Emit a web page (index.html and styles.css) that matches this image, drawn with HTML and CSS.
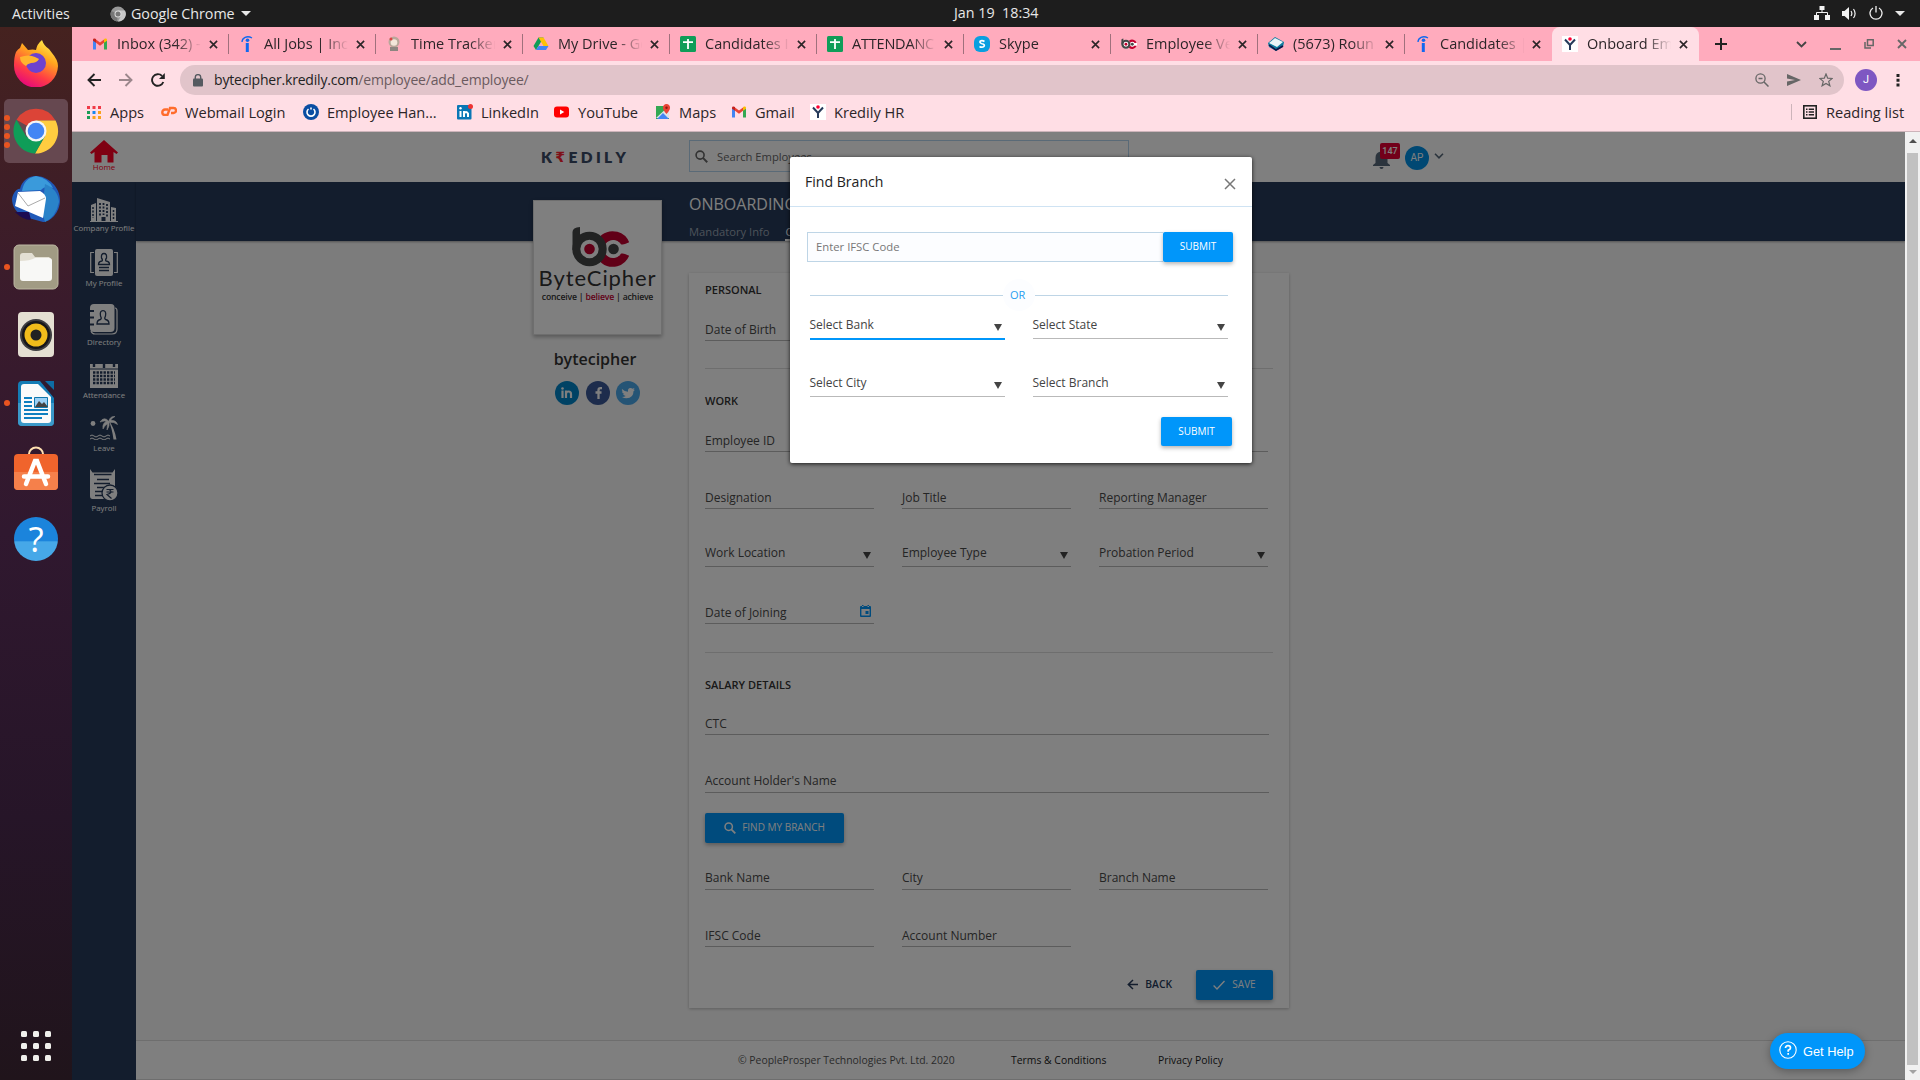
FILE: index.html
```html
<!DOCTYPE html>
<html lang="en">
<head>
<meta charset="utf-8">
<title>Onboard Employee</title>
<link rel="stylesheet" href="styles.css">
</head>
<body>
<svg class="defs" width="0" height="0">
  <defs>
    <symbol id="x" viewBox="0 0 10 10"><path d="M1 1l8 8M9 1l-8 8" stroke="currentColor" stroke-width="1.8" fill="none"/></symbol>
    <symbol id="gmail" viewBox="0 0 16 16"><path d="M1 13.500V4l3 2v7.500z" fill="#4285f4"/><path d="M12 13.500V6l3-2v9.500z" fill="#34a853"/><path d="M4 6.800V3.500l4 3 4-3v3.300l-4 3z" fill="#ea4335"/><path d="M1 4.700V4c0-1.600 1.800-1.900 3-1v3.800z" fill="#c5221f"/><path d="M15 4.700V4c0-1.600-1.800-1.900-3-1v3.800z" fill="#fbbc04"/></symbol>
    <symbol id="indeed" viewBox="0 0 16 16"><path d="M6.800 7h3v9h-3z" fill="#1168ef"/><circle cx="8.500" cy="4.300" r="1.800" fill="#1168ef"/><path d="M3 6C3 2 8 -1 13 2" stroke="#1168ef" stroke-width="1.300" fill="none"/></symbol>
    <symbol id="sheets" viewBox="0 0 16 16"><rect width="16" height="16" rx="1.500" fill="#0f9d58"/><path d="M3 6.200h10M8 3v10" stroke="#fff" stroke-width="1.800"/></symbol>
    <symbol id="kred" viewBox="0 0 16 16"><rect width="16" height="16" fill="#fff"/><path d="M3 3.500l5 5.500 5-5.500M8 8v6" stroke="#263a5a" stroke-width="2" fill="none"/><circle cx="8" cy="3" r="1.800" fill="#f03"/></symbol>
    <symbol id="bc" viewBox="0 0 60 44"><path d="M54 18A13.300 13.300 0 1 0 54 28" fill="none" stroke="#c3002f" stroke-width="9"/><path d="M42 18.500h18v9H42z" fill="#fff"/><circle cx="42.500" cy="23" r="9" fill="#fff"/><circle cx="42.500" cy="23" r="5.300" fill="#454747"/><circle cx="18.500" cy="23" r="16" fill="#fff"/><path d="M1.500 24V6q0-4.500 7.500-5v23z" fill="#454747"/><circle cx="18.500" cy="23" r="13.200" fill="#fff" stroke="#454747" stroke-width="8"/><circle cx="18.500" cy="23" r="5.300" fill="#c3002f"/></symbol>
    <symbol id="mag" viewBox="0 0 12 12"><circle cx="4.700" cy="4.700" r="3.700" fill="none" stroke="currentColor" stroke-width="1.500"/><path d="M7.300 7.300l4 4" stroke="currentColor" stroke-width="1.800"/></symbol>
  </defs>
</svg>

<header class="topbar">
  <span class="act">Activities</span>
  <svg class="tb-ic" width="16" height="16" viewBox="0 0 16 16"><circle cx="8" cy="8" r="7.500" fill="#999"/><path d="M8 8L1.300 5A7.500 7.500 0 0 0 7 15.500z" fill="#777"/><path d="M8 4.500h7A7.500 7.500 0 0 1 8 15.500l3-5.500z" fill="#c8c8c8"/><circle cx="8" cy="8" r="3.500" fill="#ddd"/><circle cx="8" cy="8" r="2.500" fill="#777"/></svg>
  <span class="appname">Google Chrome</span>
  <i class="tri"></i>
  <span class="clock">Jan 19&nbsp; 18:34</span>
  <span class="tray">
    <svg width="16" height="14" viewBox="0 0 16 14"><path d="M5.500 0h5v4h-5zM0 9h5v5H0zM11 9h5v5h-5z" fill="#f2f2f2"/><path d="M8 4v2.500M2.500 9V6.500h11V9" stroke="#f2f2f2" fill="none"/></svg>
    <svg width="15" height="13" viewBox="0 0 15 13"><path d="M0 4h2.500L7 0v13L2.500 9H0z" fill="#f2f2f2"/><path d="M9 4q1.700 2.500 0 5M11.500 2q3.200 4.500 0 9" stroke="#f2f2f2" stroke-width="1.200" fill="none"/></svg>
    <svg width="14" height="14" viewBox="0 0 14 14"><path d="M4 2A6 6 0 1 0 10 2M7 0v6.500" stroke="#f2f2f2" stroke-width="1.300" fill="none"/></svg>
    <i class="tri"></i>
  </span>
</header>

<div class="desk">
  <nav class="dock">
    <div class="app"><svg width="46" height="48" viewBox="0 0 46 48"><defs><linearGradient id="ff" x1=".8" y1="0" x2=".3" y2="1"><stop offset="0" stop-color="#fff44f"/><stop offset=".35" stop-color="#ffa51f"/><stop offset=".7" stop-color="#ff3c45"/><stop offset="1" stop-color="#e4067e"/></linearGradient></defs><path d="M3 13q2-3 4-4l2-5 6 7q5-1 8 0 1-6 6-10 2 6 7 9l3 4q6 7 6 13A22 22 0 0 1 1 26Q1 18 3 13z" fill="url(#ff)"/><circle cx="23" cy="24" r="10" fill="#6d42cf"/><path d="M7 18q9-3 15 0l4 2q-2 4-8 4-4 1-5 3-6-3-6-9z" fill="#ffb52e"/></svg></div>
    <div class="app on"><span class="dots"><i></i><i></i><i></i><i></i></span><svg width="46" height="46" viewBox="0 0 46 46"><path d="M23 23L3.500 11.700A22.500 22.500 0 0 1 42.500 12.500H23z" fill="#dc4437"/><path d="M23 12.500h19.500A22.500 22.500 0 0 1 22 45.500L32 28z" fill="#ffcd40"/><path d="M3.500 11.700L13.500 29l9.500 4-1 12.500A22.500 22.500 0 0 1 3.500 11.700z" fill="#0f9d58"/><path d="M13.500 28.500L22 45.500 32 28z" fill="#0f9d58"/><circle cx="23" cy="23" r="10.500" fill="#f5f5f5"/><circle cx="23" cy="23" r="8.300" fill="#4285f4"/></svg></div>
    <div class="app"><svg width="48" height="48" viewBox="0 0 48 48"><path d="M24 1C36 1 48 12 48 25S38 47 31 47L13 42C4 38 0 31 0 24 1 17 6 13 8 14 10 5 17 1 24 1z" fill="#2059b8"/><path d="M10 16Q12 3 24 1q12 2 17 12-8-3-12 2z" fill="#3a9adb"/><path d="M33 9q13 5 14 18-3 15-14 20l-3-10z" fill="#2a83c9"/><path d="M3 37q8 8 16 8l-2-8z" fill="#1c0b52"/><path d="M6 17l22-1q6 3 6 8l-3 19L3 31z" fill="#fff"/><path d="M6 18l10 13 17-8" fill="none" stroke="#aaa"/></svg></div>
    <div class="app"><span class="dots"><i></i></span><svg width="46" height="46" viewBox="0 0 46 46"><rect x="1" y="1" width="44" height="44" rx="5" fill="#a19b84" stroke="#bdb8a3"/><path d="M7 12q0-3 3-3h9l3 4h14l3 3v4H7z" fill="#e3dfd3"/><path d="M7 17q10 0 15-3h14q3 0 3 3v17q0 3-3 3H10q-3 0-3-3z" fill="#f8f8f6"/></svg></div>
    <div class="app"><svg width="36" height="46" viewBox="0 0 36 46"><rect width="36" height="45" rx="4" fill="#e4dfd2"/><circle cx="18" cy="23" r="16" fill="#3d3d40"/><circle cx="18" cy="23" r="14" fill="#17171a"/><circle cx="18" cy="23" r="11.500" fill="#f0bc1b"/><circle cx="18" cy="23" r="5.500" fill="#222"/></svg></div>
    <div class="app"><span class="dots"><i></i></span><svg width="36" height="45" viewBox="0 0 36 45"><rect width="36" height="45" rx="4" fill="#147cb5"/><path d="M0 22h36v19q0 4-4 4H4q-4 0-4-4z" fill="#3b99c9"/><path d="M3 6q0-3 3-3h14l13 13v23q0 3-3 3H6q-3 0-3-3z" fill="#fafafa"/><path d="M22 0h14v17z" fill="#301a2e"/><path d="M27 0h9v9z" fill="#0e6da5"/><path d="M6 17h8M6 21h8M6 25h8M6 29h24M6 33h24M6 37h18" stroke="#0e7fc0" stroke-width="2"/><path d="M16.500 16.500h13v10h-13z" fill="#9bd0f5" stroke="#1177ab"/><path d="M17 26l4-6 3 3 2-2 4 5z" fill="#444"/></svg></div>
    <div class="app bag"><svg width="46" height="46" viewBox="0 0 46 46"><path d="M16 12V8a7 6.500 0 0 1 14 0v4" fill="none" stroke="#ffe0b0" stroke-width="2"/><rect x="1" y="8" width="44" height="36" rx="4" fill="#f0642c"/><path d="M1 26h44v14q0 4-4 4H5q-4 0-4-4z" fill="#f5804b"/><path d="M13 38L22 15h2l9 23M11 30.500h24" stroke="#fff" stroke-width="4.500" stroke-linecap="round" fill="none"/></svg></div>
    <div class="app help">?</div>
    <div class="grid9"><i></i><i></i><i></i><i></i><i></i><i></i><i></i><i></i><i></i></div>
  </nav>

  <div class="win">
    <div class="tabs">
      <div class="tab"><svg><use href="#gmail"/></svg><span>Inbox (342) -</span><svg class="cx"><use href="#x"/></svg></div>
      <div class="tab"><svg><use href="#indeed"/></svg><span>All Jobs | Inc</span><svg class="cx"><use href="#x"/></svg></div>
      <div class="tab"><svg viewBox="0 0 16 16"><circle cx="8" cy="6" r="5.500" fill="#b9a79a"/><circle cx="8" cy="6.500" r="3.300" fill="#f3e6da"/><path d="M4 11h8v4H4z" fill="#8d8580"/><circle cx="5" cy="3" r="1.500" fill="#d44"/></svg><span>Time Tracker</span><svg class="cx"><use href="#x"/></svg></div>
      <div class="tab"><svg viewBox="0 0 16 16"><path d="M5.500 1.500h5L5.500 10 3 14 .5 10z" fill="#0f9d58"/><path d="M5.500 1.500h5l5 8.500h-5z" fill="#ffc107"/><path d="M5.500 10h10L13 14H3z" fill="#4285f4"/></svg><span>My Drive - Go</span><svg class="cx"><use href="#x"/></svg></div>
      <div class="tab"><svg><use href="#sheets"/></svg><span>Candidates I</span><svg class="cx"><use href="#x"/></svg></div>
      <div class="tab"><svg><use href="#sheets"/></svg><span class="tight">ATTENDANC</span><svg class="cx"><use href="#x"/></svg></div>
      <div class="tab"><svg viewBox="0 0 16 16"><rect width="16" height="16" rx="6" fill="#0a9fe0"/><path d="M10.500 5.500Q8 3.800 6.200 5.200q-1 1.600 1.800 2.500 3.200.8 2 2.700Q8 12 5.500 10.500" stroke="#fff" stroke-width="1.700" fill="none"/></svg><span>Skype</span><svg class="cx"><use href="#x"/></svg></div>
      <div class="tab"><svg><use href="#bc"/></svg><span>Employee Ve</span><svg class="cx"><use href="#x"/></svg></div>
      <div class="tab"><svg viewBox="0 0 16 16"><path d="M0 7l7-6 9 5-1 5-7 4-7-4z" fill="#0c7a9e"/><path d="M1 7l6-5 8 4-6 5z" fill="#e9f3f7"/><path d="M1 9l7 5 7-4" stroke="#114" stroke-width="1.500" fill="none"/></svg><span>(5673) Roun</span><svg class="cx"><use href="#x"/></svg></div>
      <div class="tab"><svg><use href="#indeed"/></svg><span>Candidates |</span><svg class="cx"><use href="#x"/></svg></div>
      <div class="tab active"><svg><use href="#kred"/></svg><span>Onboard Em</span><svg class="cx"><use href="#x"/></svg></div>
      <svg class="plus" viewBox="0 0 12 12"><path d="M6 0v12M0 6h12" stroke="#222" stroke-width="2"/></svg>
      <div class="wc">
        <svg width="11" height="7" viewBox="0 0 11 7"><path d="M1 1l4.500 4.500L10 1" stroke="#444" stroke-width="1.800" fill="none"/></svg>
        <svg width="11" height="11" viewBox="0 0 11 11"><path d="M0 10h11" stroke="#666" stroke-width="2"/></svg>
        <svg width="10" height="10" viewBox="0 0 10 10"><path d="M3.500.8h5.700v5.700H3.500zM1 3v6h6" stroke="#666" stroke-width="1.500" fill="none"/></svg>
        <svg width="10" height="10" class="grey"><use href="#x"/></svg>
      </div>
    </div>

    <div class="toolbar">
      <div class="navs">
        <svg width="14" height="14" viewBox="0 0 14 14"><path d="M14 7H2M7.500 1L1.500 7l6 6" stroke="#222" stroke-width="1.900" fill="none"/></svg>
        <svg width="14" height="14" viewBox="0 0 14 14"><path d="M0 7h12M6.500 1l6 6-6 6" stroke="#9c878c" stroke-width="1.900" fill="none"/></svg>
        <svg width="14" height="14" viewBox="0 0 14 14"><path d="M12.300 9A5.800 5.800 0 1 1 11 2.900" stroke="#222" stroke-width="1.900" fill="none"/><path d="M13.800 0v6H8z" fill="#222"/></svg>
      </div>
      <div class="omni">
        <svg width="10" height="13" viewBox="0 0 10 13"><rect y="4.500" width="10" height="8" rx="1" fill="#555a60"/><path d="M2.300 5V3a2.700 2.400 0 0 1 5.400 0v2" stroke="#555a60" stroke-width="1.400" fill="none"/></svg>
        <span class="url"><b>bytecipher.kredily.com</b>/employee/add_employee/</span>
        <span class="oi">
          <svg width="14" height="14" viewBox="0 0 14 14"><circle cx="5.500" cy="5.500" r="4.600" stroke="#666" stroke-width="1.300" fill="none"/><path d="M9 9l4.500 4.500M3.500 5.500h4" stroke="#666" stroke-width="1.500"/></svg>
          <svg width="14" height="12" viewBox="0 0 14 12"><path d="M0 0l14 6-14 6V7.500L8 6 0 4.500z" fill="#666"/></svg>
          <svg width="14" height="14" viewBox="0 0 14 14"><path d="M7 1l1.700 4.200 4.500.3-3.500 2.900 1.200 4.400L7 10.400l-3.900 2.400 1.200-4.400L.8 5.500l4.500-.3z" stroke="#666" stroke-width="1.200" fill="none"/></svg>
        </span>
      </div>
      <span class="ava">J</span>
      <svg class="keb" width="4" height="14" viewBox="0 0 4 14"><path d="M.5 1h3v3h-3zM.5 5.800h3v3h-3zM.5 10.600h3v3h-3z" fill="#222"/></svg>
    </div>

    <div class="bm">
      <div class="b1"><svg viewBox="0 0 16 16"><path d="M1 2h3v3H1zM6.500 2h3v3h-3zM12 2h3v3h-3z" fill="#f03a47"/><path d="M1 7h3v3H1z" fill="#1a9c56"/><path d="M6.500 7h3v3h-3z" fill="#1686f0"/><path d="M12 7h3v3h-3zM6.500 12h3v3h-3zM12 12h3v3h-3z" fill="#f9a11b"/><path d="M1 12h3v3H1z" fill="#1a9c56"/></svg>Apps</div>
      <div class="b2"><svg viewBox="0 0 16 16"><path d="M7 5.500H4a2.700 2.700 0 0 0 0 5.400h2.500L9 4h3.500a2.300 2.300 0 0 1 0 5H10" stroke="#ff6c2c" stroke-width="2.400" fill="none"/></svg>Webmail Login</div>
      <div class="b3"><svg viewBox="0 0 16 16"><circle cx="8" cy="8" r="8" fill="#0a4da2"/><path d="M5.500 5a4 4 0 1 0 5 0M8 3.500v2" stroke="#fff" stroke-width="1.600" fill="none"/></svg>Employee Han…</div>
      <div class="b4"><svg viewBox="0 0 16 16"><rect y="1" width="14.500" height="14.500" rx="1" fill="#0a77b5"/><path d="M3.500 7v6M7 7v6M7 9.500q2-3 4 0V13" stroke="#fff" stroke-width="2" fill="none"/><circle cx="3.500" cy="4.300" r="1.200" fill="#fff"/><circle cx="13.500" cy="2.500" r="2.500" fill="#e33"/></svg>LinkedIn</div>
      <div class="b5"><svg viewBox="0 0 16 16"><rect y="2.500" width="15" height="11" rx="3" fill="#f00"/><path d="M6 5.500v5L10.300 8z" fill="#fff"/></svg>YouTube</div>
      <div class="b6"><svg viewBox="0 0 16 16"><path d="M1 2h13v13H1z" fill="#34a853"/><path d="M1 14L14 2v12z" fill="#dfe3e6"/><path d="M2 15l6-6 6 6z" fill="#4285f4"/><path d="M11.500 0a3.500 3.500 0 0 1 3.500 4q0 2-3.500 6Q8 6 8 4a3.500 3.500 0 0 1 3.500-4z" fill="#ea4335"/><circle cx="11.500" cy="3.700" r="1.200" fill="#8c1a12"/></svg>Maps</div>
      <div class="b7"><svg><use href="#gmail"/></svg>Gmail</div>
      <div class="b8"><svg><use href="#kred"/></svg>Kredily HR</div>
      <div class="b9"><svg width="14" height="14" viewBox="0 0 14 14"><rect x=".8" y=".8" width="12.400" height="12.400" fill="none" stroke="#222" stroke-width="1.600"/><path d="M3 4.200h1.500M3 7h1.500M3 9.800h1.500M5.700 4.200H11M5.700 7H11M5.700 9.800H11" stroke="#222" stroke-width="1.400"/></svg>Reading list</div>
    </div>

    <div class="view">
      <div class="page">
        <header class="hd">
          <div class="side-item home"><svg width="28" height="23" viewBox="0 0 28 23"><path d="M14 0l14 12.500-1.500 1.500-3-2v10.500h-6V15h-6v7.500h-7V12l-3 2L0 12.500z" fill="#ff0024"/></svg><span>Home</span></div>
          <div class="logo"><span>K</span><span class="r">₹</span><span>E</span><span>D</span><span>I</span><span>L</span><span>Y</span></div>
          <div class="search"><svg width="13" height="13"><use href="#mag"/></svg>Search Employees</div>
          <div class="bell"><svg width="17" height="19" viewBox="0 0 17 19"><path d="M8.500 0a1.500 1.500 0 0 1 1.500 1.800q4.500 1.200 4.500 6V13l2.500 2v1H0v-1l2.500-2V7.800q0-4.800 4.500-6A1.500 1.500 0 0 1 8.500 0zM6.500 17h4a2 2 0 0 1-4 0z" fill="#57687a"/></svg><em>147</em></div>
          <div class="ap">AP</div>
          <svg class="chev" width="10" height="6" viewBox="0 0 10 6"><path d="M1 .800l4 4 4-4" stroke="#57687a" stroke-width="1.600" fill="none"/></svg>
        </header>
        <div class="body">
          <aside class="side">
            <div class="side-item s1"><svg width="28" height="24" viewBox="0 0 28 24"><path d="M0 23h28v1H0zM1 7l5-2v18H1zM7 0l13 4v19H7zM21 9l5 1v13h-5z" fill="#fff"/><path d="M3 9v11M23.500 12v9" stroke="#263a5a" stroke-width="1.500" stroke-dasharray="2 1.500"/><path d="M10 5v14M13.500 5v12M17 6v13" stroke="#263a5a" stroke-width="1.800" stroke-dasharray="2 1.500"/><path d="M11.500 19h4v4h-4z" fill="#263a5a"/></svg><span>Company Profile</span></div>
            <div class="side-item s2"><svg width="28" height="27" viewBox="0 0 28 27"><rect x="5" width="18" height="27" rx="2" fill="#fff"/><path d="M4 3.500H.700v20H4M24 3.500h3.300v20H24" stroke="#fff" stroke-width="1.200" fill="none"/><path d="M8.500 15.500q0-3 3.500-3.500 1-1-.500-3Q11 4.500 14 4.500T16.500 9q-1.500 2-.5 3 3.500.5 3.500 3.500zM9 18.500h10M9 21.500h10" stroke="#263a5a" stroke-width="1.300" fill="none"/></svg><span>My Profile</span></div>
            <div class="side-item s3"><svg width="28" height="31" viewBox="0 0 28 31"><path d="M25 4q2 0 2 3v18q0 5-5 5H5q-3 0-4-3" stroke="#fff" stroke-width="1.200" fill="none"/><path d="M4 0h17q3.500 0 3.500 3.500V24q0 4-4 4H4q-4 0-4-4V4q0-4 4-4z" fill="#fff"/><path d="M0 7h4M0 13.500h4M0 20.500h4" stroke="#263a5a" stroke-width="1.800"/><path d="M7 20q0-4 3.500-4.500 1.500-1 0-3.500Q9.500 6.700 13 6.700T15.500 12q-1.500 2.500 0 3.500Q19 16 19 20z" stroke="#263a5a" stroke-width="1.300" fill="none"/></svg><span>Directory</span></div>
            <div class="side-item s4"><svg width="28" height="24" viewBox="0 0 28 24"><path d="M0 0h28v4.500H0zM0 5.500h28V24H0z" fill="#fff"/><path d="M4 0v3M14 0v4M24 0v3" stroke="#263a5a" stroke-width="2.400"/><path d="M3 8.500h22M3 12h22M3 15.500h22M3 19h22" stroke="#263a5a" stroke-width="2.500" stroke-dasharray="2.400 1.100"/></svg><span>Attendance</span></div>
            <div class="side-item s5"><svg width="28" height="24" viewBox="0 0 28 24"><circle cx="3" cy="7.500" r="2.400" fill="#fff"/><path d="M18.500 4q6 8 8 19.500h-3Q22 12 18.500 4z" fill="#fff"/><path d="M18.500 5Q14 0 10 6q5-2 8 0M18 5q-6 1-5 8 2-4 5.500-6M18.500 5Q17 9 17 14q3-4 2-9M19 5q1-5 6-4.500-3 1-5 4.500M19 4.500q7-1 8.500 4-4-3-8-2" fill="#fff" stroke="#fff" stroke-width=".6"/><path d="M0 20q2-2 4 0t4 0 4 0 4 0 4 0M0 23q2-2 4 0t4 0 4 0 4 0 4 0" stroke="#fff" fill="none"/></svg><span>Leave</span></div>
            <div class="side-item s6"><svg width="28" height="33" viewBox="0 0 28 33"><path d="M0 0l2.500 3.500h20L25 0v27.500q0 2.500-2.500 2.500h-20Q0 30 0 27z" fill="#fff"/><path d="M4 5.500h17.500M7 10.500h12M4 14.500h16M7 18.500h12M5 22.500h9M5 26.500h8" stroke="#263a5a" stroke-width="1.600"/><circle cx="20" cy="24" r="8" fill="#fff" stroke="#263a5a" stroke-width="1.300"/><path d="M16.500 20.500h7M16.500 23h7M17 20.500h2q5 3-2 5l4.500 4" stroke="#263a5a" stroke-width="1.200" fill="none"/></svg><span>Payroll</span></div>
          </aside>
          <main class="main">
            <div class="band">
              <h1>ONBOARDING</h1>
              <div class="subnav"><span>Mandatory Info</span><span class="cur">Complete Info</span></div>
            </div>
            <div class="cols">
              <section class="prof">
                <div class="pcard">
                  <svg width="60" height="44"><use href="#bc"/></svg>
                  <div class="bn">ByteCipher</div>
                  <div class="tg">conceive | <b>believe</b> | achieve</div>
                </div>
                <div class="pname">bytecipher</div>
                <div class="soc">
                  <svg viewBox="0 0 24 24"><circle cx="12" cy="12" r="12" fill="#0085c8"/><path d="M7.500 9.500v7.500M11 9.500v7.500M11 13q0-2.500 2.500-2.500T16 13v4" stroke="#fff" stroke-width="2.200" fill="none"/><circle cx="7.500" cy="7.500" r="1.300" fill="#fff"/></svg>
                  <svg viewBox="0 0 24 24"><circle cx="12" cy="12" r="12" fill="#3b5998"/><path d="M16 7.200h-1.500q-2 0-2 2V18M9.500 11.500h6" stroke="#fff" stroke-width="2.300" fill="none"/></svg>
                  <svg viewBox="0 0 24 24"><circle cx="12" cy="12" r="12" fill="#4aa8ea"/><path d="M6 8q2.500 2.500 6 2.700Q11.500 7 14.500 7q1.200 0 2 .8l2-.8-1 2 1.500-.3-1.500 1.500Q17.500 17 10.500 17.300 8 17.300 6 16q2.500 0 3.700-1-2-.3-2.700-2h1.300Q6 12.500 6 10.300l1 .3Q5.200 9 6 8z" fill="#fff"/></svg>
                </div>
              </section>
              <section class="card">
                <h2>PERSONAL</h2>
                <div class="row r1"><div class="f">Date of Birth</div></div>
                <hr>
                <h2>WORK</h2>
                <div class="row r2"><div class="f">Employee ID</div><div class="f"></div><div class="f"></div></div>
                <div class="row r3"><div class="f">Designation</div><div class="f">Job Title</div><div class="f">Reporting Manager</div></div>
                <div class="row r4"><div class="f sel">Work Location<i></i></div><div class="f sel">Employee Type<i></i></div><div class="f sel">Probation Period<i></i></div></div>
                <div class="row r5"><div class="f dt">Date of Joining<svg width="11" height="12" viewBox="0 0 11 12"><path d="M1 1h9q1 0 1 1v9q0 1-1 1H1q-1 0-1-1V2q0-1 1-1zM1.400 4v6.600h8.200V4zM2 0h1.500v2H2zM7.500 0H9v2H7.500zM5.500 6h3v3h-3z" fill="#0096fa" fill-rule="evenodd"/></svg></div></div>
                <hr class="h2">
                <h2>SALARY DETAILS</h2>
                <div class="row r6"><div class="f wide">CTC</div></div>
                <div class="row r7"><div class="f wide">Account Holder's Name</div></div>
                <div class="btn find"><svg width="12" height="12"><use href="#mag"/></svg>FIND MY BRANCH</div>
                <div class="row r8"><div class="f">Bank Name</div><div class="f">City</div><div class="f">Branch Name</div></div>
                <div class="row r9"><div class="f">IFSC Code</div><div class="f">Account Number</div></div>
                <div class="acts">
                  <div class="back"><svg width="11" height="11" viewBox="0 0 11 11"><path d="M11 5.500H1.500M6 1L1.300 5.500 6 10" stroke="#263a5a" stroke-width="1.500" fill="none"/></svg>BACK</div>
                  <div class="btn save"><svg width="12" height="10" viewBox="0 0 12 10"><path d="M.600 5.500L4 9l7.500-8" stroke="#fff" stroke-width="1.300" fill="none"/></svg>SAVE</div>
                </div>
              </section>
            </div>
            <footer class="ft"><span>© PeopleProsper Technologies Pvt. Ltd. 2020</span><span class="k1">Terms &amp; Conditions</span><span class="k2">Privacy Policy</span></footer>
          </main>
        </div>
        <div class="veil"></div>
        <div class="modal">
          <div class="mh"><span>Find Branch</span><svg width="12" height="12" viewBox="0 0 12 12"><path d="M1 1l10 10M11 1L1 11" stroke="#777" stroke-width="1.500"/></svg></div>
          <div class="ifsc"><div class="inp">Enter IFSC Code</div><div class="btn sub">SUBMIT</div></div>
          <div class="or"><i></i><span>OR</span><i></i></div>
          <div class="mr m1"><div class="f sel blue">Select Bank<i></i></div><div class="f sel">Select State<i></i></div></div>
          <div class="mr m2"><div class="f sel">Select City<i></i></div><div class="f sel">Select Branch<i></i></div></div>
          <div class="btn sub2">SUBMIT</div>
        </div>
        <div class="gethelp"><svg width="18" height="18" viewBox="0 0 18 18"><circle cx="9" cy="9" r="8.200" stroke="#fff" stroke-width="1.100" fill="none"/><path d="M6.500 7q0-2.300 2.500-2.300T11.500 7Q11.500 8.200 9.200 9.300v1.400M9.200 12v1.700" stroke="#fff" stroke-width="1.700" fill="none"/></svg>Get Help</div>
      </div>
      <div class="sb"><i class="up"></i><div class="th"></div><i class="dn"></i></div>
    </div>
  </div>
</div>
</body>
</html>
```
FILE: styles.css
```css
* { box-sizing: border-box; }
html, body { margin: 0; height: 100%; overflow: hidden; }
body { font-family: "Open Sans", "Noto Sans", sans-serif; font-size: 12px; background: #1d1d1d; }
svg { display: block; flex: none; }
.defs { position: absolute; }

/* desktop top bar */
.topbar { height: 27px; background: #1d1d1d; color: #e8e8e8; display: grid; grid-template-columns: 98px 21px 110px 1fr; align-items: center; padding-left: 12px; font-size: 14.3px; line-height: 26px; position: relative; white-space: nowrap; }
.topbar .act { letter-spacing: 0; font-size: 14px; }
.topbar .appname { letter-spacing: -.05px; }
.topbar > .tri { grid-column: 4; }
.tri { width: 0; border: 5px solid transparent; border-top: 5px solid #e8e8e8; border-bottom: 0; }
.clock { position: absolute; left: 954px; top: 0; line-height: 26px; }
.tray { position: absolute; right: 15px; top: 6px; height: 14px; display: flex; align-items: center; gap: 12px; }

.desk { display: flex; height: 1053px; }
.dock { width: 72px; flex: none; display: flex; flex-direction: column; align-items: center; gap: 4px; padding-top: 4px; background: linear-gradient(#45221f, #3a1b2c 26%, #30182f 48%, #261528 75%, #20141b); }
.app { width: 64px; height: 64px; flex: none; border-radius: 5px; display: flex; align-items: center; justify-content: center; position: relative; }
.on { background: #664850; }
.bag { padding-bottom: 4px; }
.dots { position: absolute; left: 0; top: 0; height: 64px; display: flex; flex-direction: column; justify-content: center; gap: 3px; }
.dots i { width: 6px; height: 6px; border-radius: 3px; background: #e95420; }
.help { width: 44px; height: 44px; margin-top: 10px; border-radius: 22px; background: linear-gradient(#1b84dc 0 55%, #46a8e8 56%); color: #fff; font-size: 35px; line-height: 44px; }
.grid9 { margin-top: 466px; display: grid; grid-template-columns: repeat(3, 6px); gap: 6px; }
.grid9 i { height: 6px; border-radius: 1.5px; background: #f0f0ec; }

/* browser chrome */
.win { flex: 1; display: flex; flex-direction: column; }
.tabs { height: 34px; background: #ffabbd; padding-left: 10px; display: flex; align-items: center; color: #2c2528; font-size: 14.5px; }
.tab { width: 147px; height: 34px; display: flex; align-items: center; padding-left: 10px; position: relative; }
.tab svg { width: 16px; height: 16px; }
.tab span { width: 88px; margin-left: 9px; white-space: nowrap; line-height: 32px; -webkit-mask-image: linear-gradient(90deg, #000 66%, transparent 96%); mask-image: linear-gradient(90deg, #000 66%, transparent 96%); }
.tab .tight { letter-spacing: -.2px; }
.tab .cx { width: 9px; height: 9px; margin-left: 4px; }
.tab:not(.active)::after { content: ""; position: absolute; right: 0; top: 7px; width: 1px; height: 20px; background: #a0707c; }
.tab:nth-child(10)::after { display: none; }
.tab.active { background: #ffdee5; border-radius: 8px 8px 0 0; }
.plus { width: 12px; height: 12px; margin-left: 16px; }
.wc { margin-left: auto; padding-right: 13px; display: flex; align-items: center; gap: 23px; }
.grey { color: #666; }
.toolbar { height: 38px; background: #ffdee5; display: flex; align-items: center; }
.navs { width: 108px; padding-left: 15px; display: flex; gap: 18px; }
.omni { width: 1664px; height: 30px; border-radius: 15px; background: #e1c4ca; display: flex; align-items: center; padding: 0 11px 0 13px; }
.url { margin-left: 11px; font-size: 14px; color: #6a5a5e; letter-spacing: -.19px; line-height: 28px; }
.url b { font-weight: 400; color: #222; }
.oi { margin-left: auto; display: flex; align-items: center; gap: 18px; }
.ava { width: 22px; height: 22px; margin-left: 11px; border-radius: 11px; background: #7e57c2; color: #fff; font: 11px/22px Roboto, sans-serif; text-align: center; }
.keb { margin-left: 19px; }
.bm { height: 33px; background: #ffdee5; border-bottom: 1px solid #cdb4ba; display: grid; grid-template-columns: 75px 142px 154px 97px 101px 76px 79px 1fr 129px; padding: 0 0 6px 14px; align-items: center; font-size: 14.6px; color: #2c2528; white-space: nowrap; line-height: 26px; }
.bm div { display: flex; align-items: center; gap: 8px; }
.bm svg { width: 16px; height: 16px; }
.bm .b9 { border-left: 1px solid #cdb4ba; height: 16px; padding-left: 11px; gap: 9px; letter-spacing: 0; }
.bm .b9 svg { width: 14px; height: 14px; }

/* page */
.view { height: 948px; display: flex; }
.page { width: 1833px; height: 948px; position: relative; overflow: hidden; background: #f9f9f9; }
.hd { height: 50px; background: #fff; display: flex; position: relative; }
.side-item { width: 64px; display: flex; flex-direction: column; align-items: center; color: #fff; font-size: 7.9px; line-height: 10px; white-space: nowrap; }
.side-item span { margin-top: 2px; }
.home { width: 64px; padding-top: 8px; color: #ff0024; }
.home span { margin-top: -1px; }
.logo { width: 85px; margin-left: 405px; padding-top: 18px; display: flex; justify-content: space-between; font: 800 15.500px/14px Lato, sans-serif; color: #3a4b66; }
.logo .r { color: #ff2030; font-family: "DejaVu Sans", sans-serif; font-size: 14px; font-weight: 700; }
.search { margin: 8px 0 0 63px; width: 440px; height: 32px; border: 1px solid #b4d4ee; color: #666; font-size: 11.2px; display: flex; align-items: center; gap: 9px; padding-left: 5px; }
.search svg { width: 13px; height: 13px; color: #666; }
.bell { margin: 18px 0 0 244px; position: relative; width: 32px; }
.bell em { position: absolute; left: 7px; top: -7px; width: 20px; height: 16px; border-radius: 2px; background: #e40034; color: #fff; font: 500 9px/16px Roboto, sans-serif; text-align: center; }
.ap { margin-top: 14px; width: 24px; height: 24px; border-radius: 12px; background: #0090e6; color: #fff; font: 10px/23px Roboto, sans-serif; text-align: center; }
.chev { margin: 21px 0 0 5px; }
.body { display: flex; height: 898px; }
.side { width: 64px; background: #263a5a; padding-top: 16px; }
.s2 { margin-top: 16px; } .s3 { margin-top: 16px; } .s4 { margin-top: 17px; } .s5 { margin-top: 16px; } .s6 { margin-top: 16px; }
.s5 span { margin-top: 3px; }
.s1 span { margin-top: 1px; }
.s6 span { margin-top: 1px; }
.main { flex: 1; }
.band { height: 59px; background: #263a5a; color: #fff; padding-left: 553px; box-shadow: 0 1px 2px rgba(0,0,0,.35); }
h1 { margin: 0; padding-top: 11px; font-weight: 400; font-size: 16px; line-height: 22px; }
.subnav { display: flex; gap: 16px; line-height: 18px; margin-top: 8px; color: #9aa4b3; font-size: 11.2px; white-space: nowrap; }
.subnav span { height: 18px; }
.subnav .cur { color: #fff; border-bottom: 2px solid #fff; }
.cols { height: 799px; padding-left: 397px; display: flex; gap: 27px; }
.prof { width: 129px; margin-top: -41px; display: flex; flex-direction: column; align-items: center; }
.pcard { width: 129px; height: 135px; background: #fff; border: 1px solid #ddd; box-shadow: 0 2px 4px rgba(0,0,0,.3); position: relative; z-index: 1; display: flex; flex-direction: column; align-items: center; padding-top: 25px; }
.pcard svg { margin-left: 7px; }
.bn { font: 22px/24px Lato, sans-serif; letter-spacing: .9px; color: #333; margin-top: -4px; }
.tg { font: 600 8.7px/12px "Open Sans", sans-serif; letter-spacing: -.2px; color: #333; white-space: nowrap; margin-top: 1px; }
.tg b { color: #c3002f; font-weight: 600; }
.pname { font-size: 16px; font-weight: 600; line-height: 20px; color: #333; margin: 14px 5px 0 0; }
.soc { display: flex; gap: 6.500px; margin-top: 12px; }
.soc svg { width: 24px; height: 24px; }
.card { width: 600px; height: 735px; margin-top: 32px; padding: 9px 16px 0; background: #fff; box-shadow: 0 1px 3px rgba(0,0,0,.25); color: #4a4a4a; }
h2 { margin: 0; font-size: 11px; font-weight: 600; line-height: 16px; color: #333; }
hr { margin: 27px 0 24px; border: 0; height: 1px; background: #ddd; }
hr.h2 { margin: 28px 0 24px; }
.row { display: flex; gap: 28px; height: 24px; }
.f { width: 169px; height: 24px; border-bottom: 1px solid #b9b9b9; line-height: 24px; white-space: nowrap; font-size: 12px; }
.wide { width: 564px; }
.r1, .r2 { margin-top: 19px; } .r3 { margin-top: 33px; } .r4 { margin-top: 34px; } .r5 { margin-top: 33px; } .r6 { margin-top: 18px; } .r7 { margin-top: 34px; } .r8 { margin-top: 23px; } .r9 { margin-top: 33px; }
.r1 .f, .r2 .f, .r3 .f, .r5 .f, .r6 .f, .r9 .f { line-height: 26px; }
.sel { display: flex; justify-content: space-between; line-height: 20px; }
.sel i { width: 0; height: 0; margin: 9px 3px 0 0; border: 4px solid transparent; border-top: 7px solid #444; border-bottom: 0; }
.dt { display: flex; justify-content: space-between; padding-right: 3px; }
.dt svg { margin-top: 5px; }
.btn { background: #0096fa; color: #fff; font-size: 10px; font-weight: 500; border-radius: 2px; box-shadow: 0 2px 4px rgba(0,0,0,.3); display: flex; align-items: center; justify-content: center; height: 30px; padding-bottom: 2px; }
.find { width: 139px; margin-top: 20px; gap: 6px; }
.find svg, .save svg { position: relative; top: 1px; }
.acts { margin-top: 23px; display: flex; justify-content: flex-end; gap: 24px; }
.back { display: flex; align-items: center; gap: 7px; font-size: 10.3px; font-weight: 600; color: #263a5a; padding-bottom: 2px; }
.save { width: 77px; gap: 7px; }
.ft { height: 40px; border-top: 1px solid #ddd; border-bottom: 1px solid #ddd; background: #fff; padding-left: 602px; display: flex; align-items: center; font-size: 10.4px; color: #555; white-space: nowrap; }
.ft span { width: 216px; }
.ft .k1, .ft .k2 { color: #222; }
.ft .k1 { width: 95px; margin-left: 57px; }
.ft .k2 { width: 70px; margin-left: 52px; }
.veil { position: absolute; inset: 0; background: rgba(0,0,0,.5); z-index: 2; }

.modal { position: absolute; z-index: 3; left: 718px; top: 25px; width: 462px; height: 306px; border-radius: 2px; background: #fff; box-shadow: 0 1px 4px rgba(0,0,0,.8); color: #444; }
.mh { height: 50px; border-bottom: 1px solid #cfe3f3; display: flex; justify-content: space-between; padding: 0 16px 0 15px; font-size: 14.1px; line-height: 50px; color: #222; }
.mh svg { margin-top: 21px; }
.ifsc { display: flex; margin: 25px 0 0 17px; }
.inp { width: 356px; height: 30px; border: 1px solid #bed5e6; border-right: 0; background: #fcfdff; font-size: 11.3px; line-height: 28px; padding-left: 8px; color: #777; }
.sub { width: 70px; }
.or { margin: 17px 24px 0 20px; height: 32px; display: flex; align-items: center; color: #2a9df0; font-size: 11px; }
.or i { flex: 1; height: 1px; background: #bed5e6; }
.or span { width: 32px; height: 32px; border-radius: 16px; background: #fcfdff; line-height: 32px; padding-left: 7px; }
.mr { display: flex; gap: 28px; padding-left: 20px; text-indent: -.5px; }
.mr .f { width: 195px; }
.m1 { margin-top: 4px; height: 26px; }
.m1 .f { line-height: 20px; }
.m2 { margin-top: 32px; }
.m1 .sel i { margin-top: 9px; }
.m2 .sel i { margin-top: 9px; }
.m1 .blue { height: 25px; border-bottom: 2px solid #0096fa; }
.sub2 { width: 71px; height: 29px; margin: 20px 0 0 371px; }
.gethelp { position: absolute; z-index: 4; left: 1698px; top: 901px; width: 95px; height: 36px; border-radius: 18px; background: #0096fa; color: #fff; font: 12.8px/37px "Liberation Sans", sans-serif; display: flex; align-items: center; gap: 6px; padding-left: 9px; box-shadow: 0 2px 8px rgba(0,0,0,.3); }
.gethelp svg { margin-top: -2px; }
.sb { width: 15px; background: #f1f1f1; display: flex; flex-direction: column; align-items: center; }
.sb .up { border: 4px solid transparent; border-bottom: 4px solid #505050; border-top: 0; margin-top: 7px; }
.th { width: 11px; height: 912px; margin-top: 10px; background: #c1c1c1; }
.dn { border: 4px solid transparent; border-top: 4px solid #a3a3a3; border-bottom: 0; margin-top: 5px; }
```
